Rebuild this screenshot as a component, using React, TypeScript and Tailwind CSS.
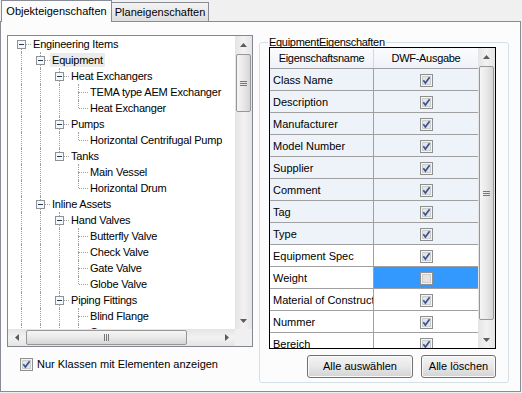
import React from "react";

type Node = {
  t: string;
  lvl: number;
  exp?: boolean;
  guides: boolean[];
  above?: boolean;
  below: boolean;
  sel?: boolean;
};

const T = true;
const F = false;

const tree: Node[] = [
  { t: "Engineering Items", lvl: 0, exp: T, guides: [], above: F, below: T },
  { t: "Equipment", lvl: 1, exp: T, guides: [T], below: T, sel: T },
  { t: "Heat Exchangers", lvl: 2, exp: T, guides: [T, T], below: T },
  { t: "TEMA type AEM Exchanger", lvl: 3, guides: [T, T, T], below: T },
  { t: "Heat Exchanger", lvl: 3, guides: [T, T, T], below: F },
  { t: "Pumps", lvl: 2, exp: T, guides: [T, T], below: T },
  { t: "Horizontal Centrifugal Pump", lvl: 3, guides: [T, T, T], below: F },
  { t: "Tanks", lvl: 2, exp: T, guides: [T, T], below: F },
  { t: "Main Vessel", lvl: 3, guides: [T, T, F], below: T },
  { t: "Horizontal Drum", lvl: 3, guides: [T, T, F], below: F },
  { t: "Inline Assets", lvl: 1, exp: T, guides: [T], below: T },
  { t: "Hand Valves", lvl: 2, exp: T, guides: [T, T], below: T },
  { t: "Butterfly Valve", lvl: 3, guides: [T, T, T], below: T },
  { t: "Check Valve", lvl: 3, guides: [T, T, T], below: T },
  { t: "Gate Valve", lvl: 3, guides: [T, T, T], below: T },
  { t: "Globe Valve", lvl: 3, guides: [T, T, T], below: F },
  { t: "Piping Fittings", lvl: 2, exp: T, guides: [T, T], below: T },
  { t: "Blind Flange", lvl: 3, guides: [T, T, T], below: T },
  { t: "Cap", lvl: 3, guides: [T, T, T], below: T },
];

const props = [
  { n: "Class Name", on: T, ro: T },
  { n: "Description", on: T, ro: T },
  { n: "Manufacturer", on: T, ro: T },
  { n: "Model Number", on: T, ro: T },
  { n: "Supplier", on: T, ro: T },
  { n: "Comment", on: T, ro: T },
  { n: "Tag", on: T, ro: T },
  { n: "Type", on: T, ro: T },
  { n: "Equipment Spec", on: T, ro: F },
  { n: "Weight", on: F, ro: F, sel: T },
  { n: "Material of Construction", on: T, ro: F },
  { n: "Nummer", on: T, ro: F },
  { n: "Bereich", on: T, ro: F },
];

const dot = "border-dotted border-[#a0a0a0]";

const Check = ({ on }: { on: boolean }) => (
  <svg width="13" height="13" viewBox="0 0 13 13" className="shrink-0">
    <rect x="0.5" y="0.5" width="12" height="12" fill="#f4f4f4" stroke="#8e8f8f" />
    <rect x="2.5" y="2.5" width="8" height="8" fill="#e4e4e4" stroke="#cdcdcd" />
    {on && (
      <path d="M3.3 6.2 L5.4 9 L9.6 3.2" fill="none" stroke="#3b5590" strokeWidth="1.7" />
    )}
  </svg>
);

const Box = () => (
  <svg width="9" height="9" viewBox="0 0 9 9" className="shrink-0">
    <rect x="0.5" y="0.5" width="8" height="8" fill="#f7f7f7" stroke="#919191" />
    <line x1="2" y1="4.5" x2="7" y2="4.5" stroke="#1e3a6e" />
  </svg>
);

const Arrow = ({ dir }: { dir: "up" | "down" | "left" | "right" }) => {
  if (dir === "up")
    return (
      <svg width="7" height="4" viewBox="0 0 7 4"><polygon points="0,4 3.5,0 7,4" fill="#5c5c5c" /></svg>
    );
  if (dir === "down")
    return (
      <svg width="7" height="4" viewBox="0 0 7 4"><polygon points="0,0 7,0 3.5,4" fill="#5c5c5c" /></svg>
    );
  if (dir === "left")
    return (
      <svg width="4" height="7" viewBox="0 0 4 7"><polygon points="4,0 4,7 0,3.5" fill="#5c5c5c" /></svg>
    );
  return (
    <svg width="4" height="7" viewBox="0 0 4 7"><polygon points="0,0 4,3.5 0,7" fill="#5c5c5c" /></svg>
  );
};

const VScroll = ({ thumb }: { thumb: string }) => (
  <div className="w-[17px] h-full shrink-0 flex flex-col bg-linear-to-r from-[#e4e4e4] via-[#f2f2f2] to-[#e4e4e4]">
    <div className="h-[17px] shrink-0 flex items-center justify-center">
      <Arrow dir="up" />
    </div>
    <div className="flex-1 pt-[1px] px-[1px]">
      <div className={`${thumb} w-[15px] rounded-[2px] border border-[#979797] bg-linear-to-r from-[#f5f5f5] via-[#e9e9e9] to-[#d5d5d5] flex flex-col items-center justify-center gap-[1px]`}>
        <div className="w-[7px] h-px bg-[#777]" />
        <div className="w-[7px] h-px bg-[#777]" />
        <div className="w-[7px] h-px bg-[#777]" />
      </div>
    </div>
    <div className="h-[17px] shrink-0 flex items-center justify-center">
      <Arrow dir="down" />
    </div>
  </div>
);

const HScroll = () => (
  <div className="flex-1 h-full flex bg-linear-to-b from-[#e4e4e4] via-[#f2f2f2] to-[#e4e4e4]">
    <div className="w-[17px] shrink-0 flex items-center justify-center">
      <Arrow dir="left" />
    </div>
    <div className="flex-1 pl-[1px] py-[1px]">
      <div className="w-[161px] h-[15px] rounded-[2px] border border-[#979797] bg-linear-to-b from-[#f5f5f5] via-[#e9e9e9] to-[#d5d5d5] flex items-center justify-center gap-[1px]">
        <div className="h-[7px] w-px bg-[#777]" />
        <div className="h-[7px] w-px bg-[#777]" />
        <div className="h-[7px] w-px bg-[#777]" />
      </div>
    </div>
    <div className="w-[17px] shrink-0 flex items-center justify-center">
      <Arrow dir="right" />
    </div>
  </div>
);

const Own = ({ n }: { n: Node }) => (
  <div className="w-[19px] h-full shrink-0 flex">
    <div className={n.exp ? "w-[5px] shrink-0" : "w-[9px] shrink-0"} />
    {n.exp ? (
      <div className="w-[9px] h-full shrink-0 flex flex-col items-center">
        <div className={`h-[4px] w-px ${n.above !== false ? `border-l ${dot}` : ""}`} />
        <Box />
        <div className={`flex-1 w-px ${n.below ? `border-l ${dot}` : ""}`} />
      </div>
    ) : (
      <div className="w-px h-full shrink-0 flex flex-col">
        <div className={`h-[8px] border-l ${dot}`} />
        <div className={`flex-1 ${n.below ? `border-l ${dot}` : ""}`} />
      </div>
    )}
    <div className="flex-1 pt-[8px]">
      <div className={`w-full border-t ${dot}`} />
    </div>
  </div>
);

const TreeRow = ({ n }: { n: Node }) => (
  <div className="h-[16px] flex items-center whitespace-nowrap">
    {n.guides.map((g, i) => (
      <div key={i} className="w-[19px] h-full shrink-0">
        {g && <div className={`w-[10px] h-full border-r ${dot}`} />}
      </div>
    ))}
    <Own n={n} />
    <span className={`h-[14px] leading-[14px] px-[2px] ${n.sel ? "bg-[#ebebeb]" : ""}`}>{n.t}</span>
  </div>
);

export default function App() {
  return (
    <div className="w-[522px] h-[393px] bg-[#f0f0f0] text-[11px] text-black font-['Liberation_Sans',Arial,sans-serif] overflow-hidden">
      <div className="flex items-end h-[21px] pl-[1px]">
        <div className="relative z-10 -mb-px h-[22px] w-[111px] border border-b-0 border-[#898c95] bg-[#fcfcfc] flex items-start justify-center pt-[2px]">
          Objekteigenschaften
        </div>
        <div className="h-[19px] w-[97px] border border-b-0 border-l-0 border-[#898c95] bg-linear-to-b from-[#f3f3f3] to-[#dedede] flex items-center justify-center">
          Planeigenschaften
        </div>
      </div>

      <div className="w-[521px] h-[371px] border border-[#898c95] bg-[#fcfcfc] flex items-start">
        <div className="ml-[6px] mt-[13px] flex flex-col">
          <div className="w-[246px] h-[312px] border border-[#828790] bg-white flex flex-col tracking-[-0.2px]">
            <div className="flex-1 min-h-0 flex">
              <div className="flex-1 overflow-hidden pl-[4px]">
                {tree.map((n, i) => (
                  <TreeRow key={i} n={n} />
                ))}
              </div>
              <VScroll thumb="h-[58px]" />
            </div>
            <div className="h-[17px] shrink-0 flex">
              <HScroll />
              <div className="w-[17px] bg-[#f0f0f0]" />
            </div>
          </div>
          <div className="mt-[11px] ml-[13px] flex items-center gap-[4px] h-[13px]">
            <Check on />
            <span>Nur Klassen mit Elementen anzeigen</span>
          </div>
        </div>

        <fieldset className="ml-[6px] mt-[14px] w-[250px] h-[347px] border border-[#d5dfe5] rounded-[3px] pl-[9px] pb-[3px] flex flex-col">
          <legend className="ml-[-1px] px-[1px] leading-[12px] tracking-[-0.3px]">EquipmentEigenschaften</legend>
          <div className="-mt-px w-[227px] h-[302px] border border-black bg-white flex">
            <div className="w-[208px] h-full overflow-hidden flex flex-col">
              <div className="h-[21px] shrink-0 flex border-b border-[#a0a0a0] bg-linear-to-b from-[#fbfcfe] to-[#eef2f8] tracking-[-0.3px] pt-[1px]">
                <div className="w-[104px] flex items-center justify-center border-r border-[#d4d8de]">
                  Eigenschaftsname
                </div>
                <div className="w-[104px] flex items-center justify-center">DWF-Ausgabe</div>
              </div>
              {props.map((p, i) => (
                <div
                  key={i}
                  className={`h-[22px] shrink-0 flex border-b border-[#a0a0a0] ${p.ro ? "bg-[#eef3fa]" : "bg-white"}`}
                >
                  <div className="w-[104px] shrink-0 border-r border-[#a0a0a0] pl-[3px] pt-[2px] flex items-center overflow-hidden whitespace-nowrap">
                    {p.n}
                  </div>
                  <div className={`w-[104px] shrink-0 flex items-center justify-center pt-[1px] ${p.sel ? "bg-[#3399ff]" : ""}`}>
                    <Check on={p.on} />
                  </div>
                </div>
              ))}
            </div>
            <div className="w-[17px] h-full">
              <VScroll thumb="h-[254px]" />
            </div>
          </div>
          <div className="mt-[6px] w-[227px] flex justify-end gap-[8px]">
            <button className="w-[106px] h-[23px] rounded-[3px] border border-[#707070] bg-linear-to-b from-[#f4f4f4] via-[#e8e8e8] to-[#d3d3d3] shadow-[inset_0_0_0_1px_#fafafa]">
              Alle auswählen
            </button>
            <button className="w-[75px] h-[23px] rounded-[3px] border border-[#707070] bg-linear-to-b from-[#f4f4f4] via-[#e8e8e8] to-[#d3d3d3] shadow-[inset_0_0_0_1px_#fafafa]">
              Alle löschen
            </button>
          </div>
        </fieldset>
      </div>
    </div>
  );
}
